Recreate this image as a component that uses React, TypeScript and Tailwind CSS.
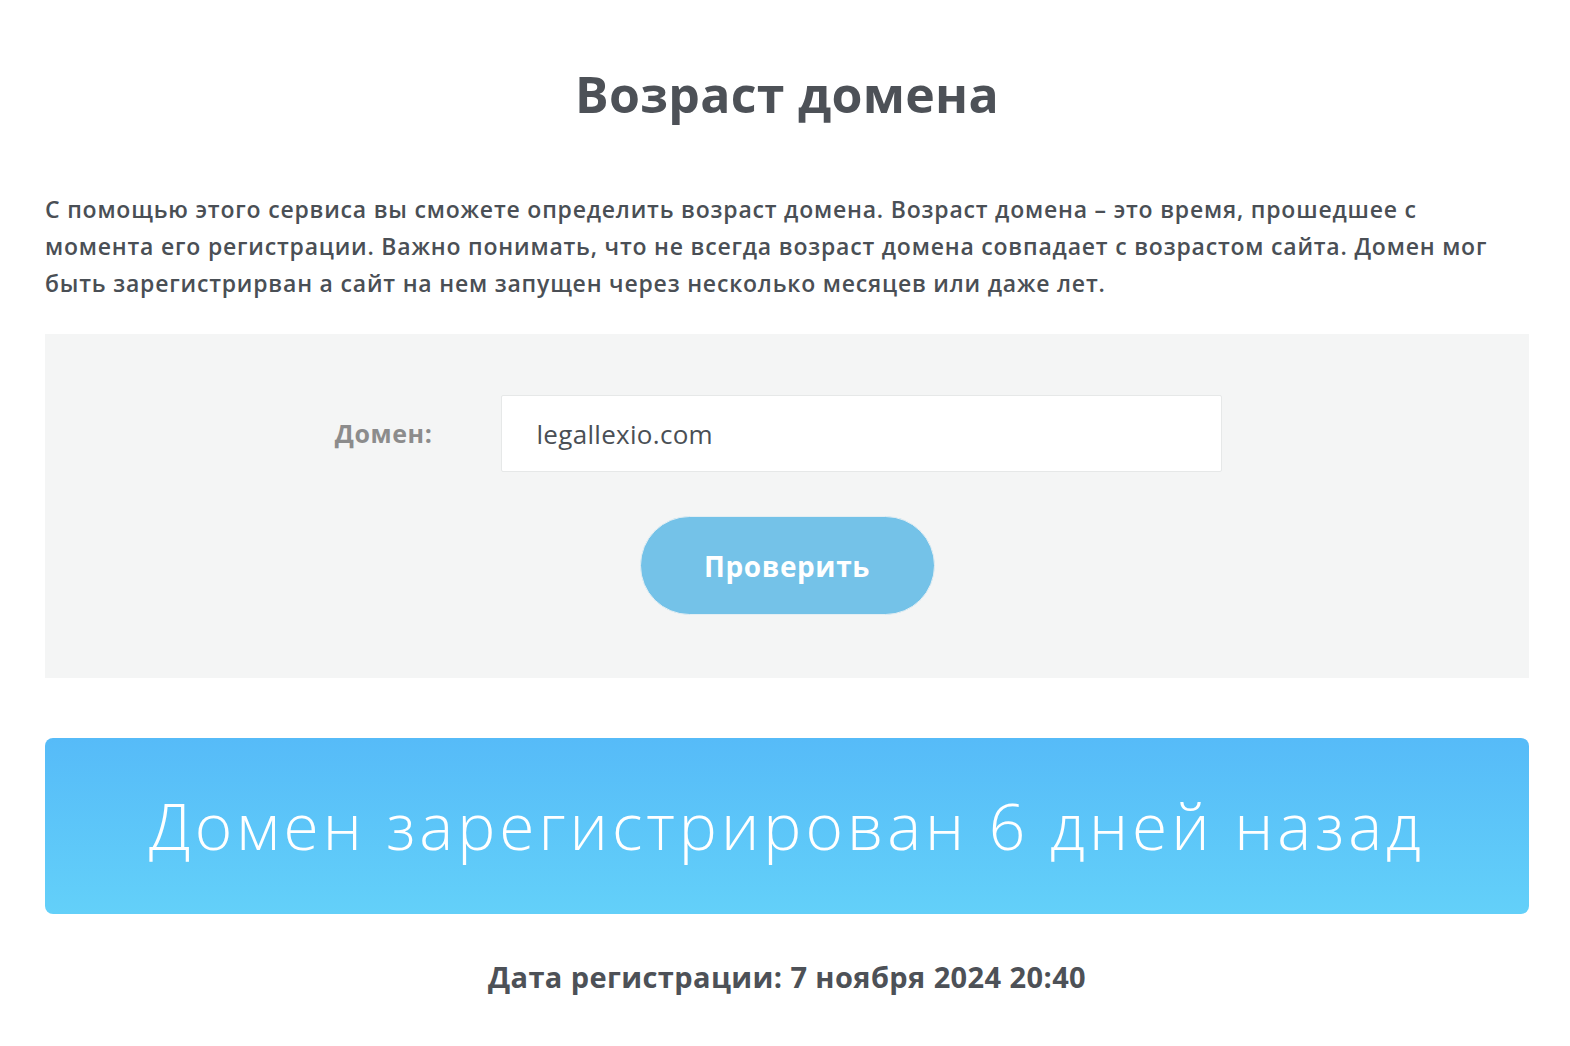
import { useState } from 'react'

export default function App() {
  const [domain, setDomain] = useState('legallexio.com')

  return (
    <div className="min-h-screen bg-white font-['Open_Sans',sans-serif] text-[#4b5056]">
      <div className="ml-[45px] mr-[41px] flex flex-col">
        <h1 className="mt-[64px] text-center text-[50px] font-bold leading-[60px] tracking-[0.3px] text-[#4d5157]">
          Возраст домена
        </h1>

        <p className="mt-[67px] text-[23px] font-semibold leading-[37px] tracking-[0.8px] text-[#4a4f55]">
          С помощью этого сервиса вы сможете определить возраст домена. Возраст домена – это время, прошедшее с
          <br />
          момента его регистрации. Важно понимать, что не всегда возраст домена совпадает с возрастом сайта. Домен мог
          <br />
          быть зарегистрирван а сайт на нем запущен через несколько месяцев или даже лет.
        </p>

        <div className="mt-[32px] flex h-[344px] flex-col items-center bg-[#f4f5f5] pt-[61px]">
          <div className="ml-[-20px] flex items-center">
            <label className="w-[168px] pr-[68px] text-right text-[25px] font-bold tracking-[0.6px] text-[#8c8c8c]">
              Домен:
            </label>
            <input
              value={domain}
              onChange={(e) => setDomain(e.target.value)}
              className="h-[77px] w-[721px] rounded-[2px] border border-[#e6e8e8] bg-white px-[35px] text-[26px] font-medium tracking-[0.3px] text-[#4a4f55] outline-none"
            />
          </div>
          <button className="mt-[44px] h-[99px] w-[295px] rounded-full border border-[#e3eef3] bg-[#74c2e8] text-[28px] font-bold tracking-[0.6px] text-white">
            Проверить
          </button>
        </div>

        <div className="mt-[60px] flex h-[176px] items-center justify-center rounded-[8px] bg-gradient-to-b from-[#56bbf8] to-[#63d0f9]">
          <span className="text-[64px] font-light leading-none tracking-[4px] text-white">
            Домен зарегистрирован 6 дней назад
          </span>
        </div>

        <p className="mt-[41px] text-center text-[29px] font-bold tracking-[0.4px] text-[#4d5157]">
          Дата регистрации: 7 ноября 2024 20:40
        </p>
      </div>
    </div>
  )
}
